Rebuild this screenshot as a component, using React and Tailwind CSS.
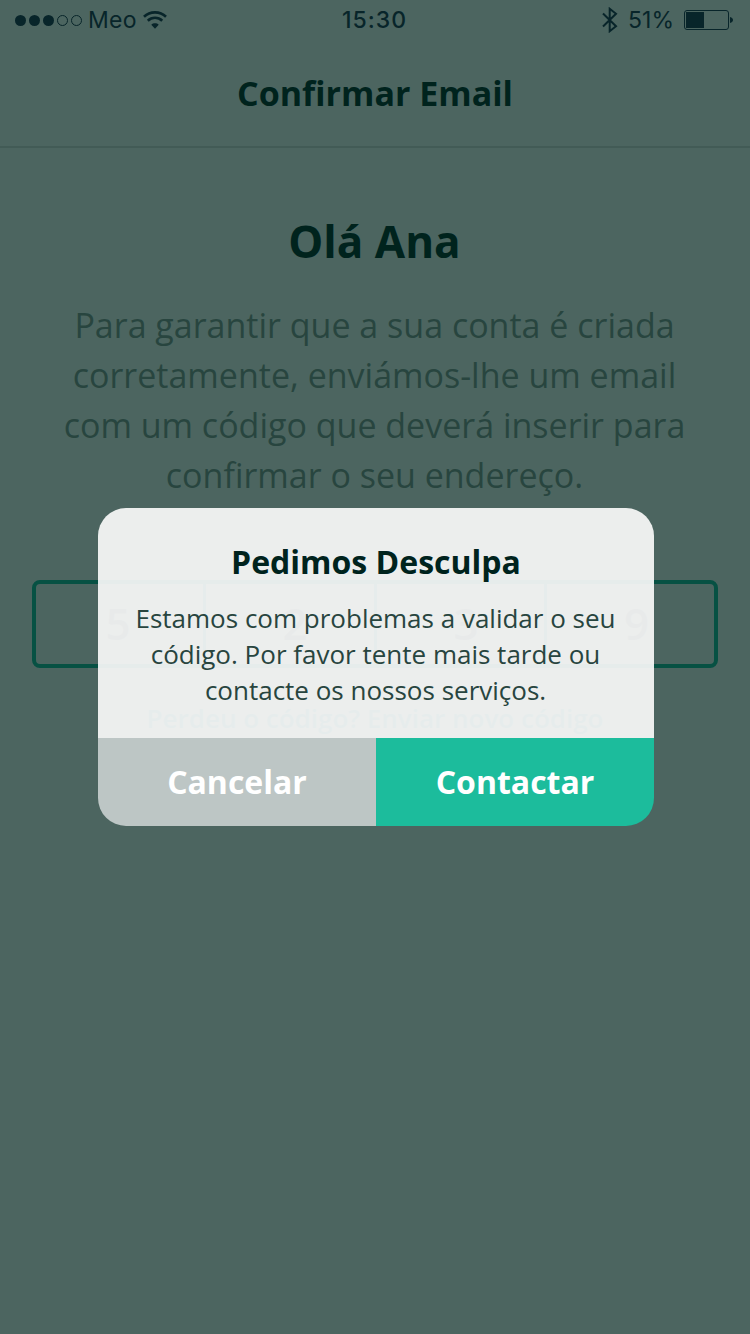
import React from "react";

function StatusBar() {
  return (
    <div className="grid h-10 shrink-0 grid-cols-3 items-center pr-[17px] pl-[15px] font-['Inter',sans-serif] text-[23px] leading-10 text-[#08252a]">
      <div className="flex items-center">
        <svg width="68" height="12" viewBox="0 0 68 12" fill="currentColor">
          <circle cx="5.5" cy="6.500" r="5.5" />
          <circle cx="19.5" cy="6.500" r="5.5" />
          <circle cx="33.5" cy="6.500" r="5.5" />
          <circle cx="47.5" cy="6.500" r="5" fill="none" stroke="currentColor" />
          <circle cx="61.5" cy="6.500" r="5" fill="none" stroke="currentColor" />
        </svg>
        <span className="ml-[5px] tracking-[0.3px]">Meo</span>
        <svg className="ml-[6px]" width="24" height="18" viewBox="0 0 24 18" fill="none" stroke="currentColor" strokeWidth="2.6">
          <path d="M1 5.800C7-.1 17-.1 23 5.800" />
          <path d="M4.800 9.700c4-3.900 10.400-3.900 14.400 0" />
          <path d="M12 17.700l-3.700-4c2-1.900 5.400-1.900 7.400 0z" fill="currentColor" stroke="none" />
        </svg>
      </div>
      <span className="pl-px text-center font-medium tracking-[1px]">15:30</span>
      <div className="flex items-center justify-end">
        <svg width="16" height="26" viewBox="0 0 16 26" fill="none" stroke="currentColor" strokeWidth="2">
          <path d="M1 6.500l13 12.700-6.300 5V1.800l6.300 5L1 19.500" />
        </svg>
        <span className="ml-[10px]">51%</span>
        <svg className="ml-[10px]" width="49" height="20" viewBox="0 0 49 20" fill="none" stroke="currentColor">
          <rect x=".5" y=".5" width="44" height="19" rx="2.500" />
          <rect x="2" y="2" width="18" height="16" fill="currentColor" stroke="none" />
          <path d="M46 7c4 .8 4 5.200 0 6z" fill="currentColor" stroke="none" />
        </svg>
      </div>
    </div>
  );
}

const DIGITS = [
  { value: "5", inset: "pr-[3px]" },
  { value: "2", inset: "pl-[10px]" },
  { value: "3", inset: "pl-[11px]" },
  { value: "9", inset: "pl-[12px]" },
];

function CodeInput() {
  return (
    <div className="mx-8 mt-[80px] grid h-[88px] grid-cols-[170px_171px_170px_1fr] rounded-lg border-4 border-[#075143] text-[44px] leading-[78px] font-semibold text-[#203a36]">
      {DIGITS.map(({ value, inset }) => (
        <div key={value} className="border-r-[3px] border-[#00544c] last:border-r-0">
          <div className={inset}>{value}</div>
        </div>
      ))}
    </div>
  );
}

function Dialog() {
  return (
    <div role="dialog" className="absolute top-[508px] left-[98px] flex h-[318px] w-[556px] flex-col overflow-hidden rounded-[28px]">
      <div className="h-[230px] bg-[#fafafa]/92 pt-[31px] text-center">
        <h2 className="text-[32px] leading-[46px] font-bold text-[#00231d]">Pedimos Desculpa</h2>
        <p className="mt-[15px] -ml-px text-[26px] leading-9 whitespace-nowrap text-[#28453f]">
          Estamos com problemas a validar o seu
          <br />
          código. Por favor tente mais tarde ou
          <br />
          contacte os nossos serviços.
        </p>
      </div>
      <div className="grid flex-1 grid-cols-2 text-[32px] font-bold text-white">
        <button className="bg-[#bdc6c5]">Cancelar</button>
        <button className="bg-[#1cbc9c]">Contactar</button>
      </div>
    </div>
  );
}

export default function App() {
  return (
    <div className="relative flex h-[1334px] w-[750px] flex-col overflow-hidden bg-[#4c6560] font-['Open_Sans',sans-serif]">
      <StatusBar />
      <header className="flex h-[108px] shrink-0 items-center justify-center border-b-2 border-[#425b56]">
        <h1 className="text-[34px] font-bold text-[#00231d]">Confirmar Email</h1>
      </header>
      <main className="text-center">
        <h2 className="mt-[61px] -ml-px text-[44px] leading-[64px] font-bold text-[#00231d]">Olá Ana</h2>
        <p className="mt-[27px] -ml-px text-[34px] leading-[50px] whitespace-nowrap text-[#28453f]">
          Para garantir que a sua conta é criada
          <br />
          corretamente, enviámos-lhe um email
          <br />
          com um código que deverá inserir para
          <br />
          confirmar o seu endereço.
        </p>
        <CodeInput />
        <p className="mt-8 text-[26px] leading-9 font-semibold text-[#00544c]">Perdeu o código? Enviar novo código</p>
      </main>
      <Dialog />
    </div>
  );
}
